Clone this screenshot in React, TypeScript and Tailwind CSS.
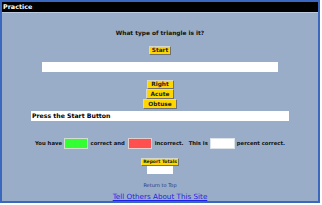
import React from 'react';

export default function App() {
    return (
        <div className="w-[322px] h-[205px] bg-white font-['DejaVu_Sans',Verdana,sans-serif]">
            <div className="w-[320px] h-[203px] border-2 border-[#3b68bf] bg-[#99adc9] flex flex-col items-center">
                {/* Title bar */}
                <div className="self-stretch h-[11px] bg-black border-b border-[#bccbe0] text-white font-bold text-[6.4px] leading-[10px] pl-[1px]">
                    Practice
                </div>

                <div className="mt-[16px] text-[5.85px] leading-[8px] font-bold text-[#111]">What type of triangle is it?</div>

                <button className="mt-[9px] w-[22px] h-[9px] bg-[#ffd700] border border-[#d8d8c8] border-r-[#707070] border-b-[#707070] text-[5.8px] leading-[7px] font-bold text-[#222]">
                    Start
                </button>

                <div className="mt-[7px] w-[236px] h-[10px] bg-white" />

                <div className="mt-[8px] flex flex-col items-center">
                    <button className="w-[27px] h-[9px] bg-[#ffd700] border border-[#d8d8c8] border-r-[#707070] border-b-[#707070] text-[5.8px] leading-[7px] font-bold text-[#222]">
                        Right
                    </button>
                    <button className="w-[28px] h-[10px] bg-[#ffd700] border border-[#d8d8c8] border-r-[#707070] border-b-[#707070] text-[5.8px] leading-[8px] font-bold text-[#222]">
                        Acute
                    </button>
                    <button className="w-[34px] h-[10px] bg-[#ffd700] border border-[#d8d8c8] border-r-[#707070] border-b-[#707070] text-[5.8px] leading-[8px] font-bold text-[#222]">
                        Obtuse
                    </button>
                </div>

                <div className="mt-[2px] w-[258px] h-[10px] bg-white text-[6.2px] leading-[10px] font-bold text-black pl-[1px]">
                    Press the Start Button
                </div>

                {/* Score row */}
                <div className="mt-[17px] flex items-center text-[5.3px] font-bold text-[#111] leading-[11px]">
                    <span>You have</span>
                    <span className="ml-[1.5px] w-[24px] h-[11px] bg-[#33ff33] border border-[#cfe0cf]" />
                    <span className="ml-[3px]">correct and</span>
                    <span className="ml-[3.5px] w-[24px] h-[11px] bg-[#ff4f4f] border border-[#e0cfcf]" />
                    <span className="ml-[2.5px]">incorrect.</span>
                    <span className="ml-[5px]">This is</span>
                    <span className="ml-[2px] w-[25px] h-[11px] bg-white border border-[#dde3ea]" />
                    <span className="ml-[2px]">percent correct.</span>
                </div>

                <button className="mt-[9px] w-[38px] h-[8px] bg-[#ffd700] border border-[#d8d8c8] border-r-[#707070] border-b-[#707070] text-[4.5px] leading-[6px] font-bold text-[#222]">
                    Report Totals
                </button>
                <div className="w-[26px] h-[8px] bg-white" />

                <a href="#" className="mt-[7px] text-[5px] leading-[8px] text-[#1f3a80]">Return to Top</a>
                <a href="#" className="mt-[4px] text-[7.2px] leading-[8px] text-[#1f1fe0] underline">Tell Others About This Site</a>
            </div>
        </div>
    );
}
